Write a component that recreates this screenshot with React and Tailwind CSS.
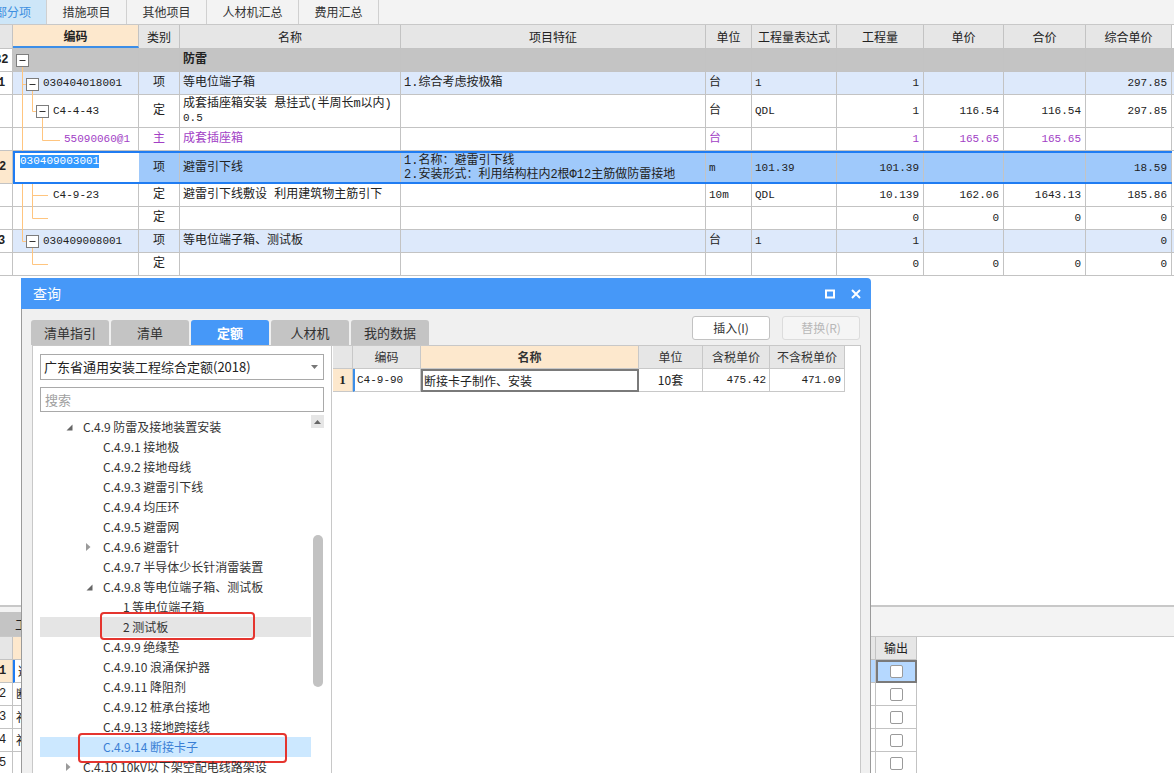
import React from 'react';

// main grid column widths
const GW = ['w-[13px]', 'w-[126px]', 'w-[41px]', 'w-[221px]', 'w-[305px]', 'w-[46px]', 'w-[85px]', 'w-[87px]', 'w-[80px]', 'w-[82px]', 'w-[86px]'];
// bottom grid column widths
const BW = ['w-[13px]', 'w-[100px]', 'w-[60px]', 'w-[200px]', 'w-[503px]', 'w-[41px]'];
// dialog grid column widths
const DW = ['w-[20px]', 'w-[68px]', 'w-[218px]', 'w-[64px]', 'w-[67px]', 'w-[75px]'];

const C = 'justify-center';
const R = 'justify-end pr-[4px] text-[11px]';
const L = 'pl-[3px]';

const Cell = ({ w, className = '', children }) => (
  <div className={`${w} shrink-0 h-full border-r border-[#c3c3c3] flex items-center overflow-hidden whitespace-nowrap ${className}`}>
    {children}
  </div>
);

const RowNum = ({ children, className = '', shift = 'ml-[-2px]' }) => (
  <Cell w={GW[0]} className={`bg-white ${className}`}>
    <span className={`${shift} font-bold text-[12px]`}>{children}</span>
  </Cell>
);

const TopTabs = () => (
  <div className="h-[25px] flex bg-[#f3f3f3] border-b border-[#c8c8c8] text-[12px] text-[#333]">
    <div className="w-[47px] bg-[#cde6f8] text-[#3d8fe0] border-r border-[#d0d0d0] flex items-center overflow-hidden">
      <span className="ml-[-17px] whitespace-nowrap">分部分项</span>
    </div>
    <div className="w-[80px] border-r border-[#d0d0d0] flex items-center justify-center">措施项目</div>
    <div className="w-[80px] border-r border-[#d0d0d0] flex items-center justify-center">其他项目</div>
    <div className="w-[92px] border-r border-[#d0d0d0] flex items-center justify-center">人材机汇总</div>
    <div className="w-[80px] border-r border-[#d0d0d0] flex items-center justify-center">费用汇总</div>
  </div>
);

const headers = ['', '编码', '类别', '名称', '项目特征', '单位', '工程量表达式', '工程量', '单价', '合价', '综合单价'];

const MainGrid = () => (
  <div className="font-['Liberation_Mono','Noto_Sans_CJK_SC',monospace] text-[12px] leading-[14px] text-[#222]">
    {/* header */}
    <div className="flex h-[24px] border-b border-[#c3c3c3] font-['Noto_Sans_CJK_SC',sans-serif]">
      {headers.map((h, i) =>
        i === 1 ? (
          <Cell key={i} w={GW[i]} className="justify-center bg-[#fde8cd] font-bold border-b-2 border-b-[#3c8ee8]">{h}</Cell>
        ) : (
          <Cell key={i} w={GW[i]} className="justify-center bg-[#e6e6e6]">{h}</Cell>
        )
      )}
    </div>

    {/* 防雷 */}
    <div className="flex h-[23px] border-b border-[#c3c3c3] bg-[#c4c4c4]">
      <RowNum shift="ml-[-6px]">B2</RowNum>
      <Cell w={GW[1]} />
      <Cell w={GW[2]} />
      <Cell w={GW[3]} className={`${L} font-bold`}>防雷</Cell>
      {[4, 5, 6, 7, 8, 9, 10].map((i) => <Cell key={i} w={GW[i]} />)}
    </div>

    {/* row 1 */}
    <div className="flex h-[23px] border-b border-[#c3c3c3] bg-[#dde9fb]">
      <RowNum>1</RowNum>
      <Cell w={GW[1]} className="pl-[30px] text-[11px]">030404018001</Cell>
      <Cell w={GW[2]} className={C}>项</Cell>
      <Cell w={GW[3]} className={L}>等电位端子箱</Cell>
      <Cell w={GW[4]} className={L}>1.综合考虑按极箱</Cell>
      <Cell w={GW[5]} className={L}>台</Cell>
      <Cell w={GW[6]} className={`${L} text-[11px]`}>1</Cell>
      <Cell w={GW[7]} className={R}>1</Cell>
      <Cell w={GW[8]} />
      <Cell w={GW[9]} />
      <Cell w={GW[10]} className={R}>297.85</Cell>
    </div>

    {/* C4-4-43 */}
    <div className="flex h-[33px] border-b border-[#c3c3c3] bg-white">
      <RowNum />
      <Cell w={GW[1]} className="pl-[40px] text-[11px]">C4-4-43</Cell>
      <Cell w={GW[2]} className={C}>定</Cell>
      <Cell w={GW[3]} className={L}>
        <div>
          <div>成套插座箱安装 悬挂式(半周长m以内)</div>
          <div className="text-[11px]">0.5</div>
        </div>
      </Cell>
      <Cell w={GW[4]} />
      <Cell w={GW[5]} className={L}>台</Cell>
      <Cell w={GW[6]} className={`${L} text-[11px]`}>QDL</Cell>
      <Cell w={GW[7]} className={R}>1</Cell>
      <Cell w={GW[8]} className={R}>116.54</Cell>
      <Cell w={GW[9]} className={R}>116.54</Cell>
      <Cell w={GW[10]} className={R}>297.85</Cell>
    </div>

    {/* main material row */}
    <div className="flex h-[23px] border-b border-[#c3c3c3] bg-white text-[#a23fc6]">
      <RowNum />
      <Cell w={GW[1]} className="pl-[51px] text-[11px]">55090060@1</Cell>
      <Cell w={GW[2]} className={C}>主</Cell>
      <Cell w={GW[3]} className={L}>成套插座箱</Cell>
      <Cell w={GW[4]} />
      <Cell w={GW[5]} className={L}>台</Cell>
      <Cell w={GW[6]} />
      <Cell w={GW[7]} className={R}>1</Cell>
      <Cell w={GW[8]} className={R}>165.65</Cell>
      <Cell w={GW[9]} className={R}>165.65</Cell>
      <Cell w={GW[10]} />
    </div>

    {/* row 2 selected */}
    <div className="flex h-[33px]">
      <Cell w={GW[0]} className="bg-[#fde8cd] border-b border-b-[#c3c3c3]">
        <span className="ml-[-1px] font-bold">2</span>
      </Cell>
      <div className="flex h-full border-y-2 border-[#1f7cf2] bg-[#9fc9fb]">
        <div className={`${GW[1]} shrink-0 h-full bg-white border-l-2 border-[#1f7cf2] pl-[5px] pt-[1px]`}>
          <span className="bg-[#3399ff] text-white text-[11px] leading-[13px] inline-block">030409003001</span>
        </div>
        <Cell w={GW[2]} className={C}>项</Cell>
        <Cell w={GW[3]} className={L}>避雷引下线</Cell>
        <Cell w={GW[4]} className={L}>
          <div>
            <div>1.名称：避雷引下线</div>
            <div>2.安装形式：利用结构柱内2根Φ12主筋做防雷接地</div>
          </div>
        </Cell>
        <Cell w={GW[5]} className={`${L} text-[11px]`}>m</Cell>
        <Cell w={GW[6]} className={`${L} text-[11px]`}>101.39</Cell>
        <Cell w={GW[7]} className={R}>101.39</Cell>
        <Cell w={GW[8]} />
        <Cell w={GW[9]} />
        <Cell w={GW[10]} className={R}>18.59</Cell>
      </div>
    </div>

    {/* C4-9-23 */}
    <div className="flex h-[23px] border-b border-[#c3c3c3] bg-white">
      <RowNum />
      <Cell w={GW[1]} className="pl-[40px] text-[11px]">C4-9-23</Cell>
      <Cell w={GW[2]} className={C}>定</Cell>
      <Cell w={GW[3]} className={L}>避雷引下线敷设 利用建筑物主筋引下</Cell>
      <Cell w={GW[4]} />
      <Cell w={GW[5]} className={`${L} text-[11px]`}>10m</Cell>
      <Cell w={GW[6]} className={`${L} text-[11px]`}>QDL</Cell>
      <Cell w={GW[7]} className={R}>10.139</Cell>
      <Cell w={GW[8]} className={R}>162.06</Cell>
      <Cell w={GW[9]} className={R}>1643.13</Cell>
      <Cell w={GW[10]} className={R}>185.86</Cell>
    </div>

    {/* empty 定 */}
    <div className="flex h-[23px] border-b border-[#c3c3c3] bg-white">
      <RowNum />
      <Cell w={GW[1]} />
      <Cell w={GW[2]} className={C}>定</Cell>
      {[3, 4, 5, 6].map((i) => <Cell key={i} w={GW[i]} />)}
      {[7, 8, 9, 10].map((i) => <Cell key={i} w={GW[i]} className={R}>0</Cell>)}
    </div>

    {/* row 3 */}
    <div className="flex h-[23px] border-b border-[#c3c3c3] bg-[#dde9fb]">
      <RowNum>3</RowNum>
      <Cell w={GW[1]} className="pl-[30px] text-[11px]">030409008001</Cell>
      <Cell w={GW[2]} className={C}>项</Cell>
      <Cell w={GW[3]} className={L}>等电位端子箱、测试板</Cell>
      <Cell w={GW[4]} />
      <Cell w={GW[5]} className={L}>台</Cell>
      <Cell w={GW[6]} className={`${L} text-[11px]`}>1</Cell>
      <Cell w={GW[7]} className={R}>1</Cell>
      <Cell w={GW[8]} />
      <Cell w={GW[9]} />
      <Cell w={GW[10]} className={R}>0</Cell>
    </div>

    {/* empty 定 */}
    <div className="flex h-[23px] border-b border-[#c3c3c3] bg-white">
      <RowNum />
      <Cell w={GW[1]} />
      <Cell w={GW[2]} className={C}>定</Cell>
      {[3, 4, 5, 6].map((i) => <Cell key={i} w={GW[i]} />)}
      {[7, 8, 9, 10].map((i) => <Cell key={i} w={GW[i]} className={R}>0</Cell>)}
    </div>
  </div>
);

const TreeLines = () => (
  <svg className="absolute left-0 top-0 pointer-events-none" width="140" height="280">
    <path
      d="M22.5 66.5V151 M22.5 84.5H26.5 M32.5 90.5V111.5H36.5 M42.5 117.5V140.5H60 M22.5 184V241.5H26.5 M32.5 184V218.5H48 M32.5 195.5H48 M32.5 247.5V264.5H48"
      stroke="#ffc57f"
      fill="none"
    />
    {[[16.5, 54.5], [26.5, 78.5], [36.5, 105.5], [26.5, 235.5]].map(([x, y]) => (
      <g key={y}>
        <rect x={x} y={y} width="12" height="12" fill="white" stroke="#7d7d7d" />
        <path d={`M${x + 3} ${y + 6}H${x + 9}`} stroke="#333" />
      </g>
    ))}
  </svg>
);

const Checkbox = () => <div className="w-[13px] h-[13px] border border-[#9a9a9a] rounded-[2px] bg-white" />;

const bottomRows = [
  ['1', '避雷引下线'],
  ['2', '断接卡子'],
  ['3', '补充材料'],
  ['4', '补充材料'],
  ['5', ''],
];

const BottomPanel = () => (
  <div className="font-['Noto_Sans_CJK_SC',sans-serif] text-[12px] text-[#222]">
    <div className="h-[32px] border-t-2 border-b border-[#c8c8c8] bg-[#f3f3f3] flex items-end">
      <div className="h-[24px] w-[90px] bg-[#c4c4c4] flex items-center pl-[15px] text-[13px] overflow-hidden whitespace-nowrap">工料机</div>
    </div>
    <div className="flex h-[23px]">
      <div className={`${BW[0]} h-full bg-[#e6e6e6] border-r border-b border-[#c3c3c3]`} />
      <div className={`${BW[1]} h-full bg-[#fde8cd] border-r border-b border-[#c3c3c3]`} />
      <div className={`${BW[2]} h-full bg-[#e6e6e6] border-r border-b border-[#c3c3c3]`} />
      <div className={`${BW[3]} h-full bg-[#e6e6e6] border-r border-b border-[#c3c3c3]`} />
      <div className={`${BW[4]} h-full bg-[#e6e6e6] border-r border-b border-[#c3c3c3]`} />
      <div className={`${BW[5]} h-full bg-[#e6e6e6] border-r border-b border-[#c3c3c3] flex items-center justify-center`}>输出</div>
    </div>
    {bottomRows.map(([n, t], idx) => (
      <div key={n} className="flex h-[23px]">
        <div className={`${BW[0]} h-full border-r border-b border-[#c3c3c3] flex items-center overflow-hidden ${idx === 0 ? 'bg-[#fde8cd] font-bold' : 'bg-white'}`}>
          <span className="ml-[-1px] font-['Liberation_Mono',monospace]">{n}</span>
        </div>
        <div className={`${BW[1]} h-full border-r border-b border-[#c3c3c3] flex items-center overflow-hidden whitespace-nowrap pl-[3px] ${idx === 0 ? 'border-l-2 border-l-[#1f7cf2]' : ''}`}>{t}</div>
        <div className={`${BW[2]} h-full border-r border-b border-[#c3c3c3]`} />
        <div className={`${BW[3]} h-full border-r border-b border-[#c3c3c3]`} />
        <div className={`${BW[4]} h-full border-r border-b border-[#c3c3c3] ${idx === 0 ? 'bg-[#b5d8ff]' : ''}`} />
        {idx === 0 ? (
          <div className={`${BW[5]} h-full bg-[#b5d8ff] border-2 border-[#7a7a7a] flex items-center justify-center`}>
            <Checkbox />
          </div>
        ) : (
          <div className={`${BW[5]} h-full border-r border-b border-[#c3c3c3] flex items-center justify-center`}>
            <Checkbox />
          </div>
        )}
      </div>
    ))}
  </div>
);

const ArrowOpen = () => (
  <svg width="7" height="7" viewBox="0 0 7 7">
    <polygon points="6.5,0.5 6.5,6.5 0.5,6.5" fill="#666" />
  </svg>
);

const ArrowClosed = () => (
  <svg width="5" height="8" viewBox="0 0 5 8">
    <polygon points="0,0 4.5,4 0,8" fill="#9a9a9a" />
  </svg>
);

const tree = [
  { t: 'C.4.9 防雷及接地装置安装', pad: 'pl-[26px]', arrow: 'open' },
  { t: 'C.4.9.1 接地极', pad: 'pl-[63px]' },
  { t: 'C.4.9.2 接地母线', pad: 'pl-[63px]' },
  { t: 'C.4.9.3 避雷引下线', pad: 'pl-[63px]' },
  { t: 'C.4.9.4 均压环', pad: 'pl-[63px]' },
  { t: 'C.4.9.5 避雷网', pad: 'pl-[63px]' },
  { t: 'C.4.9.6 避雷针', pad: 'pl-[46px]', arrow: 'closed' },
  { t: 'C.4.9.7 半导体少长针消雷装置', pad: 'pl-[63px]' },
  { t: 'C.4.9.8 等电位端子箱、测试板', pad: 'pl-[46px]', arrow: 'open' },
  { t: '1 等电位端子箱', pad: 'pl-[83px]' },
  { t: '2 测试板', pad: 'pl-[83px]', sel: 'gray', box: 1 },
  { t: 'C.4.9.9 绝缘垫', pad: 'pl-[63px]' },
  { t: 'C.4.9.10 浪涌保护器', pad: 'pl-[63px]' },
  { t: 'C.4.9.11 降阻剂', pad: 'pl-[63px]' },
  { t: 'C.4.9.12 桩承台接地', pad: 'pl-[63px]' },
  { t: 'C.4.9.13 接地跨接线', pad: 'pl-[63px]' },
  { t: 'C.4.9.14 断接卡子', pad: 'pl-[63px]', sel: 'blue', box: 2 },
  { t: 'C.4.10 10kV以下架空配电线路架设', pad: 'pl-[26px]', arrow: 'closed' },
];

const TreeItem = ({ item }) => {
  const bg = item.sel === 'gray' ? 'bg-[#e5e5e5]' : item.sel === 'blue' ? 'bg-[#cce8ff] text-[#3a7fd5]' : '';
  return (
    <div className={`relative h-[20px] shrink-0 flex items-center whitespace-nowrap ${item.pad} ${bg}`}>
      {item.arrow && (
        <span className="w-[17px] flex items-center">
          {item.arrow === 'open' ? <ArrowOpen /> : <ArrowClosed />}
        </span>
      )}
      <span>{item.t}</span>
      {item.box === 1 && (
        <div className="absolute left-[60px] top-[-5px] w-[155px] h-[28px] border-2 border-[#e5352f] rounded-[4px]" />
      )}
      {item.box === 2 && (
        <div className="absolute left-[38px] top-[-4px] w-[209px] h-[30px] border-2 border-[#e5352f] rounded-[4px]" />
      )}
    </div>
  );
};

const Dialog = () => (
  <div className="absolute left-[21px] top-[278px] w-[850px] h-[500px] flex flex-col font-['Noto_Sans_CJK_SC',sans-serif] text-[#333]">
    {/* title bar */}
    <div className="h-[31px] shrink-0 bg-[#4698f8] rounded-tr-[4px] flex items-center justify-between pl-[12px] pr-[10px] text-white text-[14px]">
      <span>查询</span>
      <div className="flex items-center gap-[16px]">
        <svg width="10" height="10" viewBox="0 0 10 10">
          <rect x="1" y="1.5" width="8" height="7" fill="none" stroke="white" strokeWidth="2" />
        </svg>
        <svg width="10" height="10" viewBox="0 0 10 10">
          <path d="M1 1L9 9M9 1L1 9" stroke="white" strokeWidth="2" />
        </svg>
      </div>
    </div>

    <div className="flex-1 flex flex-col bg-[#f0f0f0] border-x border-[#9a9a9a]">
      {/* tabs and buttons */}
      <div className="h-[36px] shrink-0 flex justify-between pl-[9px] pr-[10px]">
        <div className="flex items-end gap-[2px] text-[13px]">
          {['清单指引', '清单', '定额', '人材机', '我的数据'].map((t) => (
            <div
              key={t}
              className={`w-[78px] h-[25px] rounded-t-[3px] flex items-center justify-center ${
                t === '定额' ? 'bg-[#4698f8] text-white font-bold' : 'bg-[#c4c4c4] text-[#333]'
              }`}
            >
              {t}
            </div>
          ))}
        </div>
        <div className="flex items-start gap-[12px] pt-[7px] text-[12px]">
          <div className="w-[78px] h-[24px] bg-white border border-[#c2c2c2] rounded-[3px] flex items-center justify-center text-[#333]">插入(I)</div>
          <div className="w-[78px] h-[24px] bg-[#f5f5f5] border border-[#dcdcdc] rounded-[3px] flex items-center justify-center text-[#b8b8b8]">替换(R)</div>
        </div>
      </div>

      {/* content */}
      <div className="flex-1 ml-[10px] mr-[9px] bg-white border border-[#c8c8c8] flex overflow-hidden">
        {/* left tree panel */}
        <div className="w-[299px] shrink-0 border-r border-[#c8c8c8] pl-[7px] pr-[7px] flex flex-col">
          <div className="mt-[8px] h-[26px] shrink-0 border border-[#a9a9a9] flex items-center justify-between pl-[3px] pr-[5px] text-[13px] text-[#222]">
            <span className="whitespace-nowrap">广东省通用安装工程综合定额(2018)</span>
            <svg width="7" height="4" viewBox="0 0 7 4">
              <polygon points="0,0 7,0 3.5,4" fill="#777" />
            </svg>
          </div>
          <div className="mt-[7px] h-[25px] shrink-0 border border-[#a9a9a9] flex items-center pl-[4px] text-[13px] text-[#a0a0a0]">搜索</div>
          <div className="mt-[3px] flex-1 flex overflow-hidden">
            <div className="flex-1 flex flex-col pt-[2px] text-[12px] text-[#333] overflow-hidden">
              {tree.map((it) => (
                <TreeItem key={it.t} item={it} />
              ))}
            </div>
            <div className="w-[13px] shrink-0 flex flex-col items-center">
              <div className="w-[13px] h-[13px] bg-[#e6e6e6] flex items-center justify-center">
                <svg width="7" height="4" viewBox="0 0 7 4">
                  <polygon points="3.5,0 7,4 0,4" fill="#666" />
                </svg>
              </div>
              <div className="h-[107px]" />
              <div className="w-[10px] h-[152px] bg-[#c2c2c2] rounded-[5px]" />
            </div>
          </div>
        </div>

        {/* right result grid */}
        <div className="ml-[1px] flex flex-col text-[12px]">
          <div className="flex h-[23px]">
            <div className={`${DW[0]} h-full bg-[#e6e6e6] border-r border-b border-[#c8c8c8]`} />
            <div className={`${DW[1]} h-full bg-[#e6e6e6] border-r border-b border-[#c8c8c8] flex items-center justify-center`}>编码</div>
            <div className={`${DW[2]} h-full bg-[#fde8cd] border-r border-b border-[#c8c8c8] flex items-center justify-center font-bold`}>名称</div>
            <div className={`${DW[3]} h-full bg-[#e6e6e6] border-r border-b border-[#c8c8c8] flex items-center justify-center`}>单位</div>
            <div className={`${DW[4]} h-full bg-[#e6e6e6] border-r border-b border-[#c8c8c8] flex items-center justify-center`}>含税单价</div>
            <div className={`${DW[5]} h-full bg-[#e6e6e6] border-r border-b border-[#c8c8c8] flex items-center justify-center`}>不含税单价</div>
          </div>
          <div className="flex h-[23px] text-[#222]">
            <div className={`${DW[0]} h-full bg-[#fde8cd] border-r border-b border-[#c8c8c8] flex items-center justify-center font-bold font-['Liberation_Serif',serif] text-[13px]`}>1</div>
            <div className={`${DW[1]} h-full border-l-2 border-l-[#3c8ee8] border-r border-b border-[#c8c8c8] flex items-center pl-[2px] font-['Liberation_Mono',monospace] text-[11px]`}>C4-9-90</div>
            <div className={`${DW[2]} h-full border-2 border-[#7a7a7a] flex items-center pl-[1px]`}>断接卡子制作、安装</div>
            <div className={`${DW[3]} h-full border-r border-b border-[#c8c8c8] flex items-center justify-center`}>10套</div>
            <div className={`${DW[4]} h-full border-r border-b border-[#c8c8c8] flex items-center justify-end pr-[3px] font-['Liberation_Mono',monospace] text-[11px]`}>475.42</div>
            <div className={`${DW[5]} h-full border-r border-b border-[#c8c8c8] flex items-center justify-end pr-[3px] font-['Liberation_Mono',monospace] text-[11px]`}>471.09</div>
          </div>
        </div>
      </div>
    </div>
  </div>
);

export default function App() {
  return (
    <div className="relative w-[1174px] h-[773px] overflow-hidden bg-white font-['Noto_Sans_CJK_SC',sans-serif]">
      <TopTabs />
      <MainGrid />
      <div className="h-[329px]" />
      <BottomPanel />
      <TreeLines />
      <Dialog />
    </div>
  );
}
